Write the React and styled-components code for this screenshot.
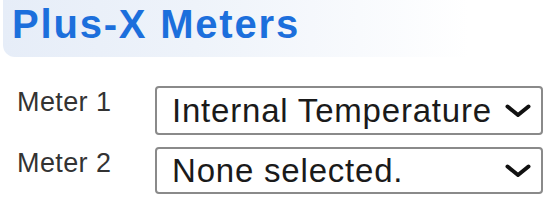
import React from "react";
import styled, { createGlobalStyle } from "styled-components";

const Global = createGlobalStyle`
  html, body { margin: 0; padding: 0; background: #fff; }
  body { font-family: "Liberation Sans", Arial, sans-serif; }
`;

const Page = styled.div`
  width: 551px;
  height: 204px;
  overflow: hidden;
`;

const Header = styled.div`
  margin-left: 3px;
  height: 57px;
  padding-left: 9px;
  border-radius: 0 0 0 12px;
  background: linear-gradient(90deg, #e6edf8 0%, #eef3fa 35%, #f8fafd 65%, #ffffff 85%);
  display: flex;
  align-items: flex-start;
`;

const Title = styled.h1`
  margin: 0;
  padding-top: 1px;
  font-family: "Liberation Sans", Arial, sans-serif;
  font-weight: bold;
  font-size: 40px;
  letter-spacing: 1.8px;
  color: #1c6fdc;
  line-height: 46px;
`;

const Form = styled.div`
  display: grid;
  grid-template-columns: 138px 388px;
  row-gap: 12px;
  padding: 29px 0 0 17px;
`;

const Label = styled.label`
  font-size: 27px;
  letter-spacing: 0.4px;
  color: #333;
  line-height: 30px;
  padding-top: 1px;
`;

const SelectWrap = styled.div`
  position: relative;
  height: ${(p) => p.$h}px;
`;

const Select = styled.select`
  appearance: none;
  -webkit-appearance: none;
  width: 100%;
  height: 100%;
  box-sizing: border-box;
  border: 2px solid #8a8a8a;
  border-radius: 4px;
  background: #fff;
  padding: 0 0 0 15px;
  font-family: "Liberation Sans", Arial, sans-serif;
  font-size: 33px;
  letter-spacing: 0.8px;
  color: #1a1a1a;
  outline: none;
`;

const Chevron = styled.svg`
  position: absolute;
  right: 11px;
  top: 50%;
  transform: translateY(-50%);
  pointer-events: none;
`;

function MeterSelect({ value, options, h }) {
  return (
    <SelectWrap $h={h}>
      <Select defaultValue={value}>
        {options.map((o) => (
          <option key={o}>{o}</option>
        ))}
      </Select>
      <Chevron width="28" height="14" viewBox="0 0 28 14">
        <path d="M3.5 2.5 L14 11 L24.5 2.5" fill="none" stroke="#111" strokeWidth="4" strokeLinecap="round" strokeLinejoin="round" />
      </Chevron>
    </SelectWrap>
  );
}

const opts = ["None selected.", "Internal Temperature"];

export default function App() {
  return (
    <Page>
      <Global />
      <Header>
        <Title>Plus-X Meters</Title>
      </Header>
      <Form>
        <Label>Meter 1</Label>
        <MeterSelect value="Internal Temperature" options={opts} h={49} />
        <Label>Meter 2</Label>
        <MeterSelect value="None selected." options={opts} h={47} />
      </Form>
    </Page>
  );
}
